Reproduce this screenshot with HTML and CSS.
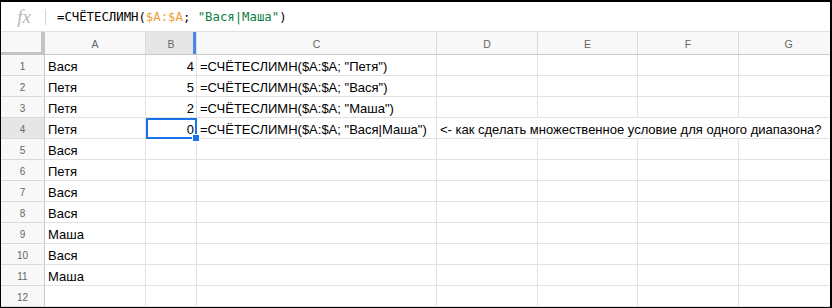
FILE: index.html
```html
<!DOCTYPE html>
<html>
<head>
    <title>Sheet</title>
    <link rel="stylesheet" href="styles.css">
</head>
<body>
    <div class="frame">
        <div class="formula-bar">
            <span class="fx">fx</span>
            <span class="sep"></span>
            <span class="formula">=СЧЁТЕСЛИМН(<span class="ref">$A:$A</span>; <span class="str">"Вася|Маша"</span>)</span>
        </div>
        <div class="grid">
            <div class="corner"></div>
            <div class="col-head">A</div>
            <div class="col-head active">B<span class="resize"></span></div>
            <div class="col-head">C</div>
            <div class="col-head">D</div>
            <div class="col-head">E</div>
            <div class="col-head">F</div>
            <div class="col-head">G</div>

            <div class="row-head">1</div>
            <div class="cell">Вася</div>
            <div class="cell num">4</div>
            <div class="cell">=СЧЁТЕСЛИМН($A:$A; "Петя")</div>
            <div class="cell"></div><div class="cell"></div><div class="cell"></div><div class="cell"></div>

            <div class="row-head">2</div>
            <div class="cell">Петя</div>
            <div class="cell num">5</div>
            <div class="cell">=СЧЁТЕСЛИМН($A:$A; "Вася")</div>
            <div class="cell"></div><div class="cell"></div><div class="cell"></div><div class="cell"></div>

            <div class="row-head">3</div>
            <div class="cell">Петя</div>
            <div class="cell num">2</div>
            <div class="cell">=СЧЁТЕСЛИМН($A:$A; "Маша")</div>
            <div class="cell"></div><div class="cell"></div><div class="cell"></div><div class="cell"></div>

            <div class="row-head active">4</div>
            <div class="cell">Петя</div>
            <div class="cell num selected">0</div>
            <div class="cell">=СЧЁТЕСЛИМН($A:$A; "Вася|Маша")</div>
            <div class="cell wide">&lt;- как сделать множественное условие для одного диапазона?</div>

            <div class="row-head">5</div>
            <div class="cell">Вася</div>
            <div class="cell"></div><div class="cell"></div><div class="cell"></div><div class="cell"></div><div class="cell"></div><div class="cell"></div>

            <div class="row-head">6</div>
            <div class="cell">Петя</div>
            <div class="cell"></div><div class="cell"></div><div class="cell"></div><div class="cell"></div><div class="cell"></div><div class="cell"></div>

            <div class="row-head">7</div>
            <div class="cell">Вася</div>
            <div class="cell"></div><div class="cell"></div><div class="cell"></div><div class="cell"></div><div class="cell"></div><div class="cell"></div>

            <div class="row-head">8</div>
            <div class="cell">Вася</div>
            <div class="cell"></div><div class="cell"></div><div class="cell"></div><div class="cell"></div><div class="cell"></div><div class="cell"></div>

            <div class="row-head">9</div>
            <div class="cell">Маша</div>
            <div class="cell"></div><div class="cell"></div><div class="cell"></div><div class="cell"></div><div class="cell"></div><div class="cell"></div>

            <div class="row-head">10</div>
            <div class="cell">Вася</div>
            <div class="cell"></div><div class="cell"></div><div class="cell"></div><div class="cell"></div><div class="cell"></div><div class="cell"></div>

            <div class="row-head">11</div>
            <div class="cell">Маша</div>
            <div class="cell"></div><div class="cell"></div><div class="cell"></div><div class="cell"></div><div class="cell"></div><div class="cell"></div>

            <div class="row-head">12</div>
            <div class="cell"></div><div class="cell"></div><div class="cell"></div><div class="cell"></div><div class="cell"></div><div class="cell"></div><div class="cell"></div>
        </div>
    </div>
</body>
</html>
```

FILE: styles.css
```css
html, body {
    margin: 0;
    padding: 0;
    background: #000;
}

body {
    width: 832px;
    height: 308px;
    overflow: hidden;
    font-family: 'Liberation Sans', Arial, sans-serif;
}

.frame {
    box-sizing: border-box;
    width: 832px;
    height: 308px;
    border-style: solid;
    border-color: #000;
    border-width: 2px 2px 1px 1px;
    background: #fff;
    overflow: hidden;
}

.formula-bar {
    box-sizing: border-box;
    height: 30px;
    display: flex;
    align-items: center;
    border-bottom: 1px solid #e0e0e0;
    background: #fff;
}

.fx {
    width: 42px;
    text-align: center;
    font-family: 'Liberation Serif', serif;
    font-style: italic;
    font-size: 19px;
    color: #b8b8b8;
    padding-left: 2px;
}

.sep {
    width: 1px;
    height: 16px;
    background: #d6d6d6;
}

.formula {
    padding-left: 11px;
    font-family: 'DejaVu Sans Mono', monospace;
    font-size: 12.3px;
    color: #000;
}

.ref {
    color: #f09c3a;
}

.str {
    color: #0b8043;
}

.grid {
    display: grid;
    grid-template-columns: 44px 101px 51px 240px 101px 100px 101px 100px;
    grid-template-rows: 23px repeat(12, 21px);
}

.grid > div {
    box-sizing: border-box;
    border-right: 1px solid #e2e2e2;
    border-bottom: 1px solid #e2e2e2;
    white-space: nowrap;
    overflow: hidden;
}

.corner {
    background: #f8f8f8;
    border-right: 4px solid #c4c4c4 !important;
    border-bottom: 3px solid #c4c4c4 !important;
}

.col-head {
    position: relative;
    background: #f8f8f8;
    color: #666;
    font-size: 10.5px;
    display: flex;
    align-items: center;
    justify-content: center;
    padding-top: 2px;
    border-bottom: 1px solid #c8c8c8 !important;
    border-right: 1px solid #dadada !important;
}

.col-head.active {
    background: #e6e6e6;
}

.resize {
    position: absolute;
    right: -1px;
    top: 0;
    width: 4px;
    height: 23px;
    background: #4a86e8;
}

.row-head {
    background: #f8f8f8;
    color: #666;
    font-size: 10px;
    display: flex;
    align-items: center;
    justify-content: center;
    padding-top: 3px;
    border-right: 1px solid #c8c8c8 !important;
    border-bottom: 1px solid #dadada !important;
}

.row-head.active {
    background: #e6e6e6;
}

.cell {
    font-size: 13px;
    color: #000;
    padding: 2px 3px 0;
    line-height: 20px;
}

.cell.num {
    text-align: right;
    padding-right: 2px;
}

.cell.wide {
    grid-column: 5 / 9;
    overflow: visible !important;
}

.grid > .selected {
    position: relative;
    overflow: visible;
    border: 2px solid #1a73e8;
    line-height: 17px;
    padding-top: 1px;
    padding-right: 1px;
}

.selected::after {
    content: '';
    position: absolute;
    right: -5px;
    bottom: -5px;
    width: 6px;
    height: 6px;
    background: #1a73e8;
    border: 1px solid #fff;
}
```
